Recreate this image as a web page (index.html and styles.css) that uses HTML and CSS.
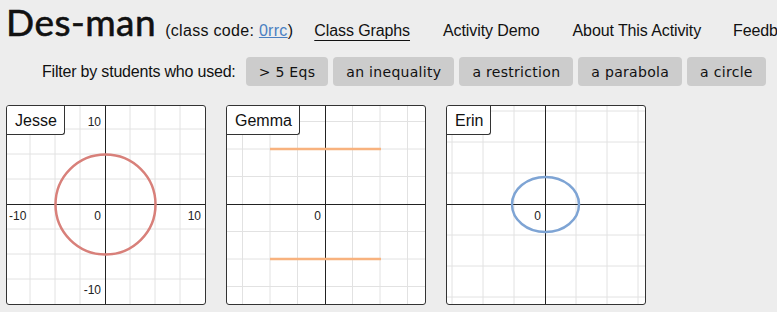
FILE: index.html
```html
<!DOCTYPE html>
<html lang="en">
<head>
    <meta charset="UTF-8">
    <title>Des-man</title>
    <link rel="stylesheet" href="styles.css">
</head>
<body>
    <!-- Header -->
    <div class="header">
        <h1 class="title">Des-man</h1>
        <span class="code">(class code: <a href="#">0rrc</a>)</span>
        <nav class="nav">
            <a href="#" class="active">Class Graphs</a>
            <a href="#">Activity Demo</a>
            <a href="#">About This Activity</a>
            <a href="#">Feedback</a>
        </nav>
    </div>

    <!-- Filters -->
    <div class="filters">
        <span class="filter-label">Filter by students who used:</span>
        <button>&gt; 5 Eqs</button>
        <button>an inequality</button>
        <button>a restriction</button>
        <button>a parabola</button>
        <button>a circle</button>
    </div>

    <!-- Student graphs -->
    <div class="graphs">
        <div class="graph">
            <div class="name">Jesse</div>
            <svg width="198" height="198" viewBox="0 0 198 198">
                <path class="grid" d="M23 0V198M48 0V198M73 0V198M123 0V198M148 0V198M173 0V198M0 23H198M0 48H198M0 73H198M0 123H198M0 148H198M0 173H198"/>
                <path class="axis" d="M98.5 0V198M0 98.5H198"/>
                <circle cx="98.5" cy="98.5" r="50" fill="none" stroke="#d8807a" stroke-width="2.5"/>
                <text x="94" y="20" text-anchor="end">10</text>
                <text x="2" y="114">-10</text>
                <text x="194" y="114" text-anchor="end">10</text>
                <text x="94" y="114" text-anchor="end">0</text>
                <text x="94" y="188" text-anchor="end">-10</text>
            </svg>
        </div>
        <div class="graph">
            <div class="name">Gemma</div>
            <svg width="198" height="198" viewBox="0 0 198 198">
                <path class="grid" d="M15.5 0V198M43 0V198M70.5 0V198M125.5 0V198M153 0V198M180.5 0V198M0 15.5H198M0 43H198M0 70.5H198M0 125.5H198M0 153H198M0 180.5H198"/>
                <path class="axis" d="M98.5 0V198M0 98.5H198"/>
                <path d="M43 43H154M43 153H154" stroke="#f8b27e" stroke-width="2.5"/>
                <text x="94" y="114" text-anchor="end">0</text>
            </svg>
        </div>
        <div class="graph">
            <div class="name">Erin</div>
            <svg width="198" height="198" viewBox="0 0 198 198">
                <path class="grid" d="M5 0V198M36 0V198M67 0V198M129 0V198M160 0V198M191 0V198M0 5H198M0 36H198M0 67H198M0 129H198M0 160H198M0 191H198"/>
                <path class="axis" d="M98.5 0V198M0 98.5H198"/>
                <ellipse cx="98.5" cy="98.5" rx="33.5" ry="27.5" fill="none" stroke="#7ea4d4" stroke-width="2.5"/>
                <text x="94" y="114" text-anchor="end">0</text>
            </svg>
        </div>
    </div>
</body>
</html>
```

FILE: styles.css
```css
body {
    margin: 0;
    background: #ededed;
    font-family: "Liberation Sans", Arial, sans-serif;
    color: #111;
    overflow: hidden;
    white-space: nowrap;
}
.header {
    display: flex;
    align-items: baseline;
    padding: 4px 0 0 6px;
    height: 42px;
}
.title {
    font-family: "Lato", sans-serif;
    font-weight: 400;
    font-size: 37px;
    line-height: 36px;
    margin: 0;
    letter-spacing: 0.5px;
    -webkit-text-stroke: 0.6px #111;
}
.code {
    font-size: 16px;
    margin-left: 9px;
    letter-spacing: 0.3px;
}
.code a {
    color: #4a7fc1;
}
.nav {
    display: flex;
    margin-left: 21px;
}
.nav a {
    color: #111;
    text-decoration: none;
    font-size: 16px;
    margin-right: 33px;
    letter-spacing: -0.1px;
}
.nav a:nth-child(3) { margin-right: 32px; }
.nav a.active {
    text-decoration: underline;
    text-underline-offset: 4px;
}
.filters {
    display: flex;
    align-items: center;
    gap: 5px;
    padding-left: 42px;
    margin-top: 11px;
}
.filter-label {
    font-size: 16px;
    letter-spacing: -0.2px;
    margin-right: 5px;
}
.filters button {
    font-family: "DejaVu Sans", Verdana, sans-serif;
    font-size: 14px;
    height: 29px;
    padding: 0 13px;
    border: none;
    border-radius: 4px;
    background: #cccccc;
    color: #111;
    letter-spacing: 0.3px;
}
.graphs {
    display: flex;
    gap: 20px;
    padding-left: 6px;
    margin-top: 19px;
}
.graph {
    position: relative;
    width: 198px;
    height: 198px;
    border: 1px solid #333;
    border-radius: 3px;
    background: #fff;
    overflow: hidden;
}
.graph svg {
    display: block;
}
.grid {
    stroke: #e2e2e2;
    stroke-width: 1;
}
.axis {
    stroke: #222;
    stroke-width: 1;
}
.graph text {
    font-family: "Liberation Sans", Arial, sans-serif;
    font-size: 12px;
    fill: #222;
}
.name {
    position: absolute;
    top: 0;
    left: 0;
    height: 28px;
    line-height: 29px;
    padding: 0 7px 0 8px;
    font-size: 16px;
    background: #fff;
    border-right: 1px solid #333;
    border-bottom: 1px solid #333;
    border-bottom-right-radius: 3px;
}
```
